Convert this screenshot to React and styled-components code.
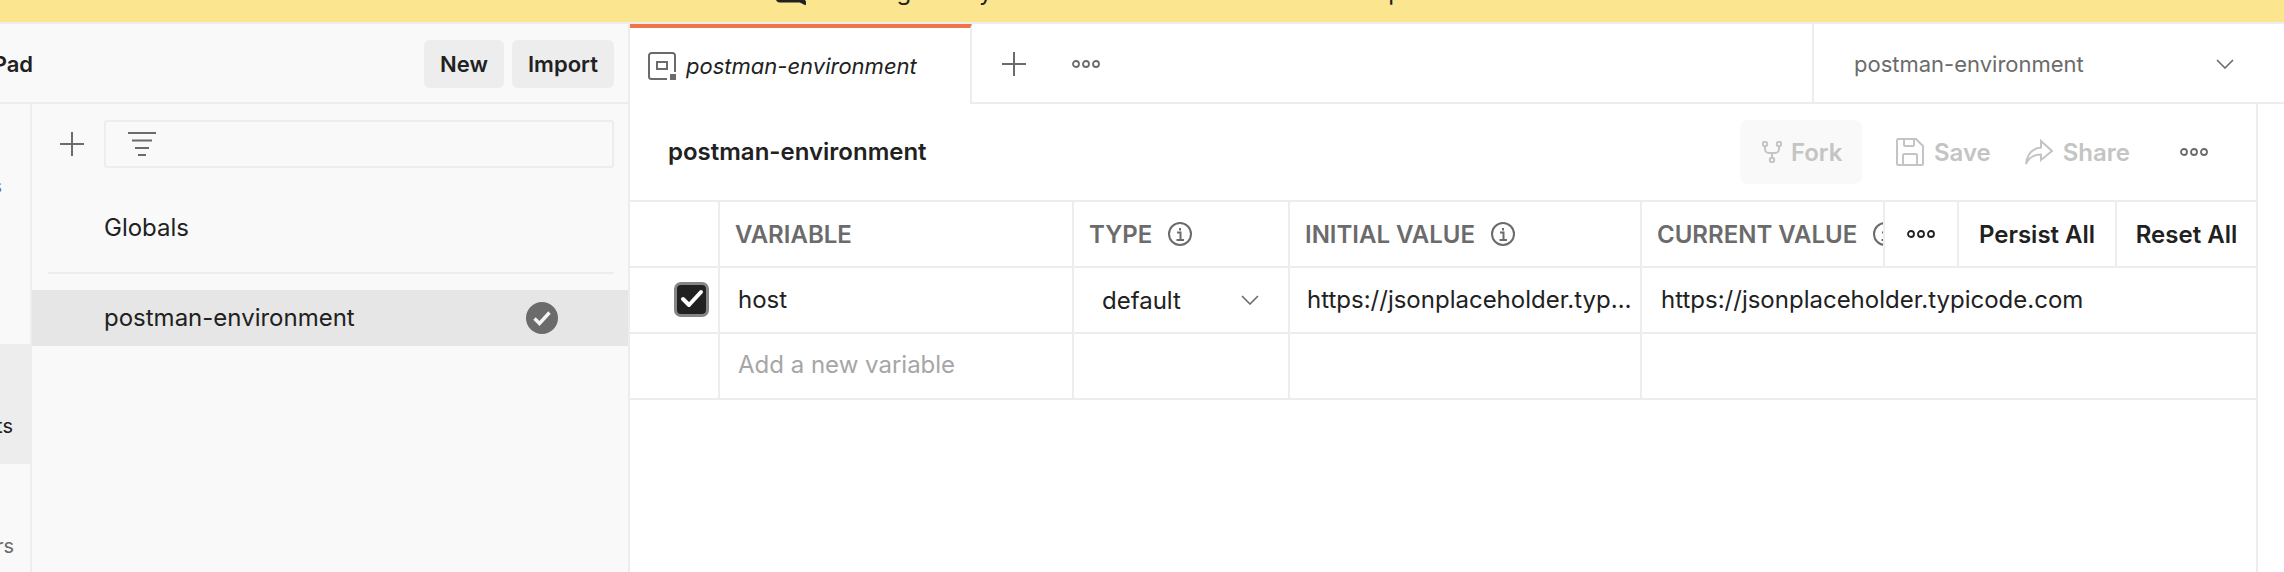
import React from 'react';
import styled, { createGlobalStyle } from 'styled-components';

const GlobalStyle = createGlobalStyle`
  html, body {
    margin: 0;
    padding: 0;
    background: #fff;
  }
  * {
    box-sizing: border-box;
  }
`;

const Page = styled.div`
  width: 2284px;
  height: 572px;
  display: flex;
  flex-direction: column;
  overflow: hidden;
  font-family: Inter, 'Liberation Sans', sans-serif;
  font-size: 24px;
  color: #212121;
  background: #fff;
`;

const Banner = styled.div`
  flex: none;
  height: 24px;
  display: flex;
  align-items: flex-end;
  gap: 10px;
  padding: 0 0 16px 776px;
  overflow: hidden;
  white-space: nowrap;
  background: #fbe58e;
  border-bottom: 2px solid #ededed;
  font-size: 24px;
  letter-spacing: 0.2px;
  line-height: 28px;
`;

const Body = styled.div`
  flex: 1;
  display: flex;
  min-height: 0;
`;

const Sidebar = styled.aside`
  flex: none;
  width: 630px;
  display: flex;
  flex-direction: column;
  background: #f9f9f9;
  border-right: 2px solid #ededed;
`;

const SidebarHeader = styled.div`
  flex: none;
  height: 80px;
  display: flex;
  align-items: center;
  justify-content: flex-end;
  gap: 8px;
  padding: 2px 14px 0 0;
  border-bottom: 2px solid #ededed;
  overflow: hidden;
`;

const WorkspaceName = styled.div`
  margin-right: auto;
  margin-left: -200px;
  width: 233px;
  text-align: right;
  font-size: 22px;
  font-weight: 600;
  white-space: nowrap;
`;

const HeaderButton = styled.button`
  height: 48px;
  width: ${({ $width }) => $width}px;
  padding: 0;
  border: 0;
  border-radius: 6px;
  background: #ededed;
  color: #212121;
  font: 600 22px Inter, sans-serif;
`;

const SidebarBody = styled.div`
  flex: 1;
  display: flex;
  min-height: 0;
`;

const Nav = styled.nav`
  flex: none;
  width: 32px;
  overflow: hidden;
  border-right: 2px solid #ededed;
`;

const NavItem = styled.div`
  height: 120px;
  display: flex;
  justify-content: flex-end;
  padding-top: 68px;
  background: ${({ $active }) => ($active ? '#ededed' : 'transparent')};
  color: ${({ $active }) => ($active ? '#212121' : '#6b6b6b')};
  font-size: 20px;
  line-height: 28px;
  white-space: nowrap;
`;

const NavLabel = styled.span`
  margin-right: ${({ $inset }) => $inset}px;
`;

const EnvPanel = styled.div`
  flex: 1;
  min-width: 0;
  padding-top: 16px;
`;

const FilterRow = styled.div`
  display: flex;
  align-items: center;
  gap: 20px;
  padding: 0 14px 0 28px;
`;

const FilterBox = styled.div`
  flex: 1;
  height: 48px;
  display: flex;
  align-items: center;
  padding-left: 22px;
  border: 2px solid #ededed;
  border-radius: 3px;
`;

const EnvRow = styled.div`
  height: 56px;
  display: flex;
  align-items: center;
  justify-content: space-between;
  padding: 0 70px 0 72px;
  background: ${({ $active }) => ($active ? '#e6e6e6' : 'transparent')};
`;

const EnvName = styled.span`
  padding-bottom: 2px;
`;

const GlobalsRow = styled(EnvRow)`
  margin-top: 32px;
`;

const Divider = styled.div`
  height: 2px;
  margin: 16px 14px 16px 16px;
  background: #ededed;
`;

const Main = styled.main`
  flex: 1;
  min-width: 0;
  display: flex;
  flex-direction: column;
`;

const TabBar = styled.div`
  flex: none;
  height: 80px;
  display: flex;
  align-items: stretch;
  border-bottom: 2px solid #ededed;
`;

const Tab = styled.div`
  position: relative;
  width: 342px;
  height: 80px;
  display: flex;
  align-items: center;
  gap: 10px;
  padding-left: 18px;
  background: #fff;
  border-top: 4px solid #ee754a;
  border-right: 2px solid #ededed;
  font-size: 22px;
  font-style: italic;
`;

const TabTools = styled.div`
  display: flex;
  align-items: center;
  gap: 46px;
  margin-left: 30px;
  padding-top: 2px;
`;

const EnvSelect = styled.div`
  margin-left: auto;
  width: 472px;
  display: flex;
  align-items: center;
  padding: 2px 0 0 40px;
  border-left: 2px solid #ededed;
  color: #6b6b6b;
  font-size: 22px;
`;

const SelectChevron = styled.span`
  display: flex;
  margin-left: ${({ $gap }) => $gap}px;
`;

const Editor = styled.section`
  flex: 1;
  width: 1628px;
  border-right: 2px solid #ededed;
`;

const TitleRow = styled.div`
  height: 98px;
  display: flex;
  align-items: center;
  justify-content: space-between;
  padding: 0 48px 0 38px;
  border-bottom: 2px solid #ededed;
`;

const Title = styled.h1`
  margin: 0 0 2px;
  font-size: 24px;
  font-weight: 600;
`;

const Actions = styled.div`
  display: flex;
  align-items: center;
`;

const ForkButton = styled.div`
  width: 122px;
  height: 64px;
  display: flex;
  align-items: center;
  gap: 9px;
  padding-left: 22px;
  border-radius: 8px;
  background: #f9f9f9;
  color: #c4c4c4;
  font-size: 24px;
  font-weight: 600;
`;

const ActionButton = styled.div`
  display: flex;
  align-items: center;
  gap: 10px;
  margin-left: 34px;
  color: #c4c4c4;
  font-size: 24px;
  font-weight: 600;
`;

const ActionMore = styled.span`
  display: flex;
  margin-left: 50px;
`;

const Table = styled.div`
  width: 1626px;
`;

const Row = styled.div`
  position: relative;
  height: 66px;
  display: grid;
  grid-template-columns: 90px 354px 216px 352px 1fr;
  border-bottom: 2px solid #ededed;
`;

const Cell = styled.div`
  min-width: 0;
  display: flex;
  align-items: center;
  padding: 0 0 2px ${({ $inset }) => $inset ?? 18}px;
  border-right: 2px solid #ededed;
  overflow: hidden;
  white-space: nowrap;
  &:last-child {
    border-right: 0;
  }
`;

const HeadCell = styled(Cell)`
  gap: 16px;
  padding: 0 0 0 15px;
  color: #6b6b6b;
  font-size: 24px;
  font-weight: 600;
`;

const Value = styled.span`
  overflow: hidden;
  text-overflow: ellipsis;
  padding-right: 4px;
`;

const Placeholder = styled.span`
  padding-bottom: 2px;
  color: #a6a6a6;
`;

const TypeSelect = styled.div`
  display: flex;
  align-items: center;
  padding-top: 2px;
`;

const Checkbox = styled.span`
  width: 35px;
  height: 35px;
  margin-left: 44px;
  display: flex;
  align-items: center;
  justify-content: center;
  background: #212121;
  border: 3px solid #858585;
  border-radius: 7px;
`;

const TableTools = styled.div`
  position: absolute;
  top: 0;
  right: 0;
  bottom: 0;
  display: flex;
  background: #fff;
  border-left: 2px solid #ededed;
  font-size: 24px;
  font-weight: 600;
`;

const ToolCell = styled.div`
  width: ${({ $width }) => $width}px;
  display: flex;
  align-items: center;
  justify-content: center;
  border-right: 2px solid #ededed;
  &:last-child {
    border-right: 0;
  }
`;

function Dots({ color = '#6b6b6b' }) {
  return (
    <svg width="28" height="8" viewBox="0 0 28 8" fill="none" stroke={color} strokeWidth="1.8">
      <circle cx="4" cy="4" r="3" />
      <circle cx="14" cy="4" r="3" />
      <circle cx="24" cy="4" r="3" />
    </svg>
  );
}

function Plus() {
  return (
    <svg width="24" height="24" viewBox="0 0 24 24" stroke="#6b6b6b" strokeWidth="2">
      <path d="M0 12h24M12 0v24" />
    </svg>
  );
}

function Chevron({ color = '#6b6b6b' }) {
  return (
    <svg width="18" height="10" viewBox="0 0 18 10" fill="none" stroke={color} strokeWidth="1.6">
      <path d="M1 1l8 8 8-8" />
    </svg>
  );
}

function FilterIcon() {
  return (
    <svg width="28" height="24" viewBox="0 0 28 24" stroke="#6b6b6b" strokeWidth="2">
      <path d="M0 1h28M4 8.5h20M7 16h14M10 23h8" />
    </svg>
  );
}

function ActiveCheck() {
  return (
    <svg width="32" height="32" viewBox="0 0 32 32">
      <circle cx="16" cy="16" r="16" fill="#6b6b6b" />
      <path d="M8.500 16.500l5 5 10-11" fill="none" stroke="#f4f4f4" strokeWidth="3.4" />
    </svg>
  );
}

function EnvIcon() {
  return (
    <svg width="28" height="28" viewBox="0 0 28 28" fill="none">
      <path
        d="M19 27H3.500A2.500 2.500 0 0 1 1 24.500V3.500A2.500 2.500 0 0 1 3.500 1h21A2.500 2.500 0 0 1 27 3.500V20"
        stroke="#6b6b6b"
        strokeWidth="2"
      />
      <rect x="9" y="10" width="10" height="7" stroke="#6b6b6b" strokeWidth="2" />
      <rect x="22" y="22" width="6" height="6" fill="#6b6b6b" />
    </svg>
  );
}

function ForkIcon() {
  return (
    <svg width="20" height="22" viewBox="0 0 20 22" fill="none" stroke="#c4c4c4" strokeWidth="2">
      <circle cx="3" cy="3" r="2.200" />
      <circle cx="17" cy="3" r="2.200" />
      <circle cx="10" cy="19" r="2.200" />
      <path d="M3 5.500V8a4 4 0 0 0 4 4h6a4 4 0 0 0 4-4V5.500M10 12v4.500" />
    </svg>
  );
}

function SaveIcon() {
  return (
    <svg width="28" height="28" viewBox="0 0 28 28" fill="none" stroke="#c4c4c4" strokeWidth="2">
      <path d="M2.500 1H20l7 7v17.500a1.500 1.500 0 0 1-1.500 1.500h-23A1.500 1.500 0 0 1 1 25.500v-23A1.500 1.500 0 0 1 2.500 1z" />
      <path d="M8 1v6a1 1 0 0 0 1 1h8a1 1 0 0 0 1-1V1M7 27V17a1 1 0 0 1 1-1h12a1 1 0 0 1 1 1v10" />
    </svg>
  );
}

function ShareIcon() {
  return (
    <svg width="28" height="26" viewBox="0 0 28 26" fill="none" stroke="#c4c4c4" strokeWidth="2">
      <path d="M16 2l11 10-11 9v-5.500C9 15.500 4 18 1 25c1-9 6-15.500 15-16.500z" />
    </svg>
  );
}

function InfoIcon() {
  return (
    <svg width="24" height="24" viewBox="0 0 24 24" fill="none" stroke="#6b6b6b" strokeWidth="2" style={{ flex: 'none' }}>
      <circle cx="12" cy="12" r="11" />
      <path d="M9 10.500h3.500V18M8.500 18h7.500M12 6v2.500" />
    </svg>
  );
}

function BubbleIcon() {
  return (
    <svg width="30" height="28" viewBox="0 0 30 28" fill="none" stroke="#212121" strokeWidth="3" style={{ flex: 'none' }}>
      <path d="M4 1h20a3 3 0 0 1 3 3v18l3 4-6-3H4a3 3 0 0 1-3-3V4a3 3 0 0 1 3-3z" />
    </svg>
  );
}

function App() {
  return (
    <Page>
      <GlobalStyle />
      <Banner>
        <BubbleIcon />
        <span>Working locally in Scratch Pad. Switch to a Workspace</span>
      </Banner>
      <Body>
        <Sidebar>
          <SidebarHeader>
            <WorkspaceName>Scratch Pad</WorkspaceName>
            <HeaderButton $width={80}>New</HeaderButton>
            <HeaderButton $width={102}>Import</HeaderButton>
          </SidebarHeader>
          <SidebarBody>
            <Nav>
              <NavItem>
                <NavLabel $inset={28}>Collections</NavLabel>
              </NavItem>
              <NavItem>
                <NavLabel $inset={40}>APIs</NavLabel>
              </NavItem>
              <NavItem $active>
                <NavLabel $inset={17}>Environments</NavLabel>
              </NavItem>
              <NavItem>
                <NavLabel $inset={16}>Mock Servers</NavLabel>
              </NavItem>
            </Nav>
            <EnvPanel>
              <FilterRow>
                <Plus />
                <FilterBox>
                  <FilterIcon />
                </FilterBox>
              </FilterRow>
              <GlobalsRow>
                <EnvName>Globals</EnvName>
              </GlobalsRow>
              <Divider />
              <EnvRow $active>
                <EnvName>postman-environment</EnvName>
                <ActiveCheck />
              </EnvRow>
            </EnvPanel>
          </SidebarBody>
        </Sidebar>
        <Main>
          <TabBar>
            <Tab>
              <EnvIcon />
              postman-environment
            </Tab>
            <TabTools>
              <Plus />
              <Dots />
            </TabTools>
            <EnvSelect>
              postman-environment
              <SelectChevron $gap={132}>
                <Chevron />
              </SelectChevron>
            </EnvSelect>
          </TabBar>
          <Editor>
            <TitleRow>
              <Title>postman-environment</Title>
              <Actions>
                <ForkButton>
                  <ForkIcon />
                  Fork
                </ForkButton>
                <ActionButton>
                  <SaveIcon />
                  Save
                </ActionButton>
                <ActionButton>
                  <ShareIcon />
                  Share
                </ActionButton>
                <ActionMore>
                  <Dots />
                </ActionMore>
              </Actions>
            </TitleRow>
            <Table>
              <Row>
                <HeadCell />
                <HeadCell>VARIABLE</HeadCell>
                <HeadCell>
                  TYPE
                  <InfoIcon />
                </HeadCell>
                <HeadCell>
                  INITIAL VALUE
                  <InfoIcon />
                </HeadCell>
                <HeadCell>
                  CURRENT VALUE
                  <InfoIcon />
                </HeadCell>
                <TableTools>
                  <ToolCell $width={74}>
                    <Dots color="#212121" />
                  </ToolCell>
                  <ToolCell $width={158}>Persist All</ToolCell>
                  <ToolCell $width={139}>Reset All</ToolCell>
                </TableTools>
              </Row>
              <Row>
                <Cell $inset={0}>
                  <Checkbox>
                    <svg width="24" height="20" viewBox="0 0 24 20" fill="none" stroke="#fff" strokeWidth="4" strokeLinecap="round" strokeLinejoin="round">
                      <path d="M3 10l6 6L21 3" />
                    </svg>
                  </Checkbox>
                </Cell>
                <Cell>host</Cell>
                <Cell $inset={28}>
                  <TypeSelect>
                    default
                    <SelectChevron $gap={60}>
                      <Chevron />
                    </SelectChevron>
                  </TypeSelect>
                </Cell>
                <Cell $inset={17}>
                  <Value>https://jsonplaceholder.typicode.com</Value>
                </Cell>
                <Cell $inset={19}>https://jsonplaceholder.typicode.com</Cell>
              </Row>
              <Row>
                <Cell />
                <Cell>
                  <Placeholder>Add a new variable</Placeholder>
                </Cell>
                <Cell />
                <Cell />
                <Cell />
              </Row>
            </Table>
          </Editor>
        </Main>
      </Body>
    </Page>
  );
}

export default App;
